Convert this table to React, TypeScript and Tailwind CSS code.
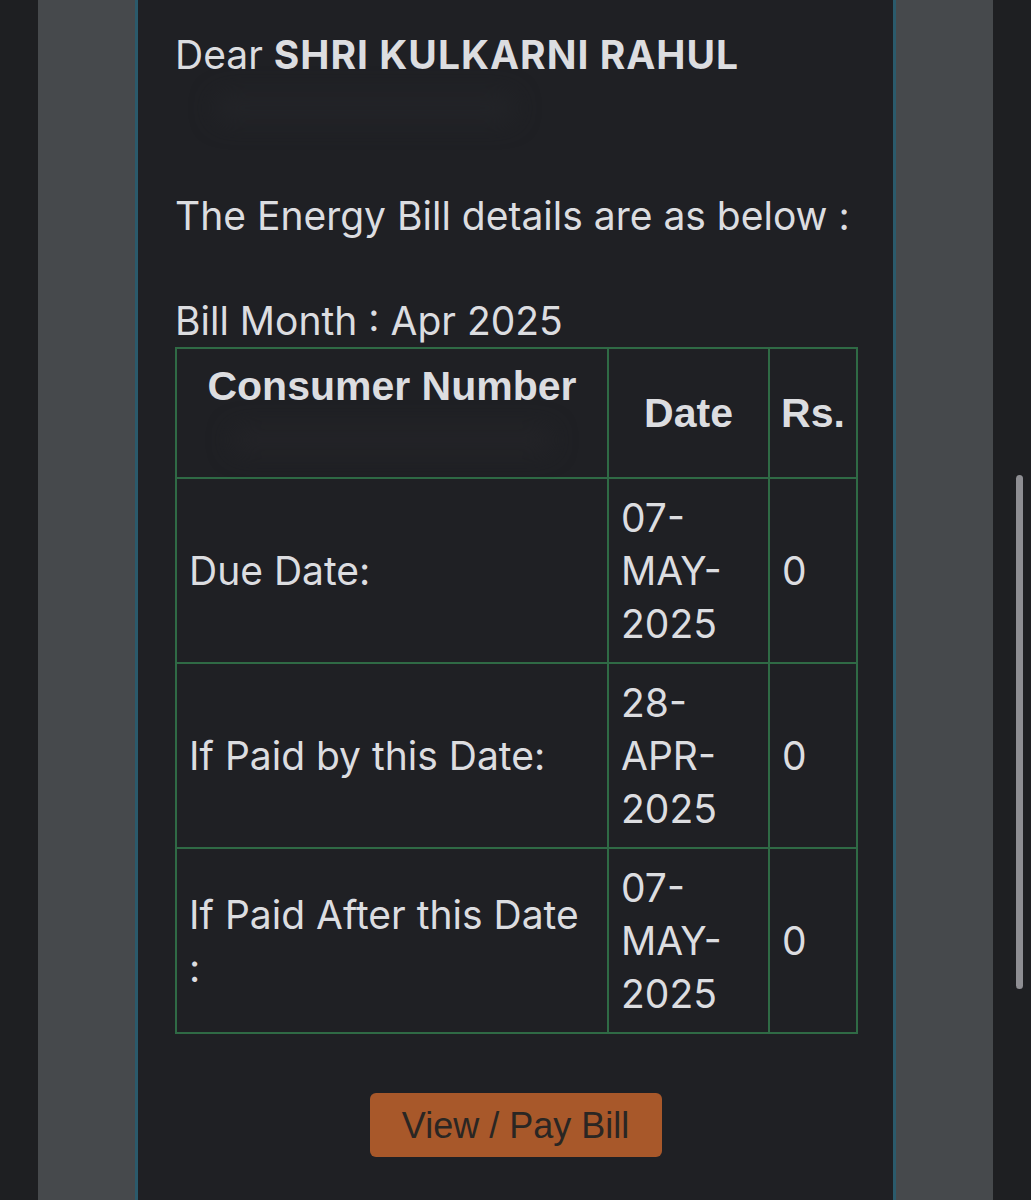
import React from 'react';

const rows = [
  { label: 'Due Date:', date: ['07-', 'MAY-', '2025'], amount: '0' },
  { label: 'If Paid by this Date:', date: ['28-', 'APR-', '2025'], amount: '0' },
  { label: 'If Paid After this Date', tail: ':', date: ['07-', 'MAY-', '2025'], amount: '0' },
];

export default function App() {
  return (
    <div className="relative flex h-[1200px] w-[1031px] overflow-hidden bg-[#1e1f22]">
      {/* side gutters */}
      <div className="w-[38px] shrink-0" />
      <div className="w-[97px] shrink-0 bg-[#46494c]" />
      <div className="w-[3px] shrink-0 bg-[#2b5a6b]" />

      {/* mail body */}
      <div className="w-[755px] shrink-0 bg-[#1f2024] px-[37px] pt-[28px] text-[39px] leading-[53px] text-[#dcdde0] [font-family:Inter,'Noto_Sans',sans-serif]">
        <p>
          Dear <span className="font-bold tracking-[1px]">SHRI KULKARNI RAHUL</span>
        </p>
        <div className="h-[53px] pt-[14px] pl-[40px]">
          <div className="h-[26px] w-[300px] rounded-full bg-[#232428] blur-md" />
        </div>
        <div className="h-[55px]" />
        <p>The Energy Bill details are as below :</p>
        <div className="h-[52px]" />
        <p>Bill Month : Apr 2025</p>

        <table className="w-[681px] table-fixed border-collapse border-2 border-[#2f6a45]">
          <colgroup>
            <col className="w-[432px]" />
            <col className="w-[161px]" />
            <col className="w-[88px]" />
          </colgroup>
          <thead>
            <tr className="[font-family:'Liberation_Sans',Arial,sans-serif] text-[41px] font-bold">
              <th className="border-2 border-[#2f6a45] px-[12px] py-[11px] text-center align-top">
                <div>Consumer Number</div>
                <div className="flex h-[53px] items-center justify-center">
                  <div className="h-[22px] w-[320px] rounded-full bg-[#242428] blur-md" />
                </div>
              </th>
              <th className="border-2 border-[#2f6a45] px-[8px] text-center align-middle">Date</th>
              <th className="border-2 border-[#2f6a45] px-[4px] text-center align-middle">Rs.</th>
            </tr>
          </thead>
          <tbody>
            {rows.map((r) => (
              <tr key={r.label}>
                <td className="border-2 border-[#2f6a45] px-[12px] py-[12px] align-middle">
                  {r.label}
                  {r.tail && (
                    <>
                      <br />
                      {r.tail}
                    </>
                  )}
                </td>
                <td className="border-2 border-[#2f6a45] px-[12px] py-[12px] align-middle">
                  {r.date.map((d) => (
                    <div key={d}>{d}</div>
                  ))}
                </td>
                <td className="border-2 border-[#2f6a45] px-[12px] py-[12px] align-middle">{r.amount}</td>
              </tr>
            ))}
          </tbody>
        </table>

        <div className="flex justify-center pt-[59px]">
          <button className="h-[64px] w-[292px] rounded-[6px] bg-[#a8582a] text-[36px] text-[#2a2623] [font-family:'Liberation_Sans',Arial,sans-serif]">
            View / Pay Bill
          </button>
        </div>
      </div>

      <div className="w-[3px] shrink-0 bg-[#2b5a6b]" />
      <div className="w-[97px] shrink-0 bg-[#46494c]" />
      <div className="w-[38px] shrink-0" />

      {/* scrollbar */}
      <div className="absolute right-[8px] top-[475px] h-[514px] w-[7px] rounded-full bg-[#8e8e93]" />
    </div>
  );
}
